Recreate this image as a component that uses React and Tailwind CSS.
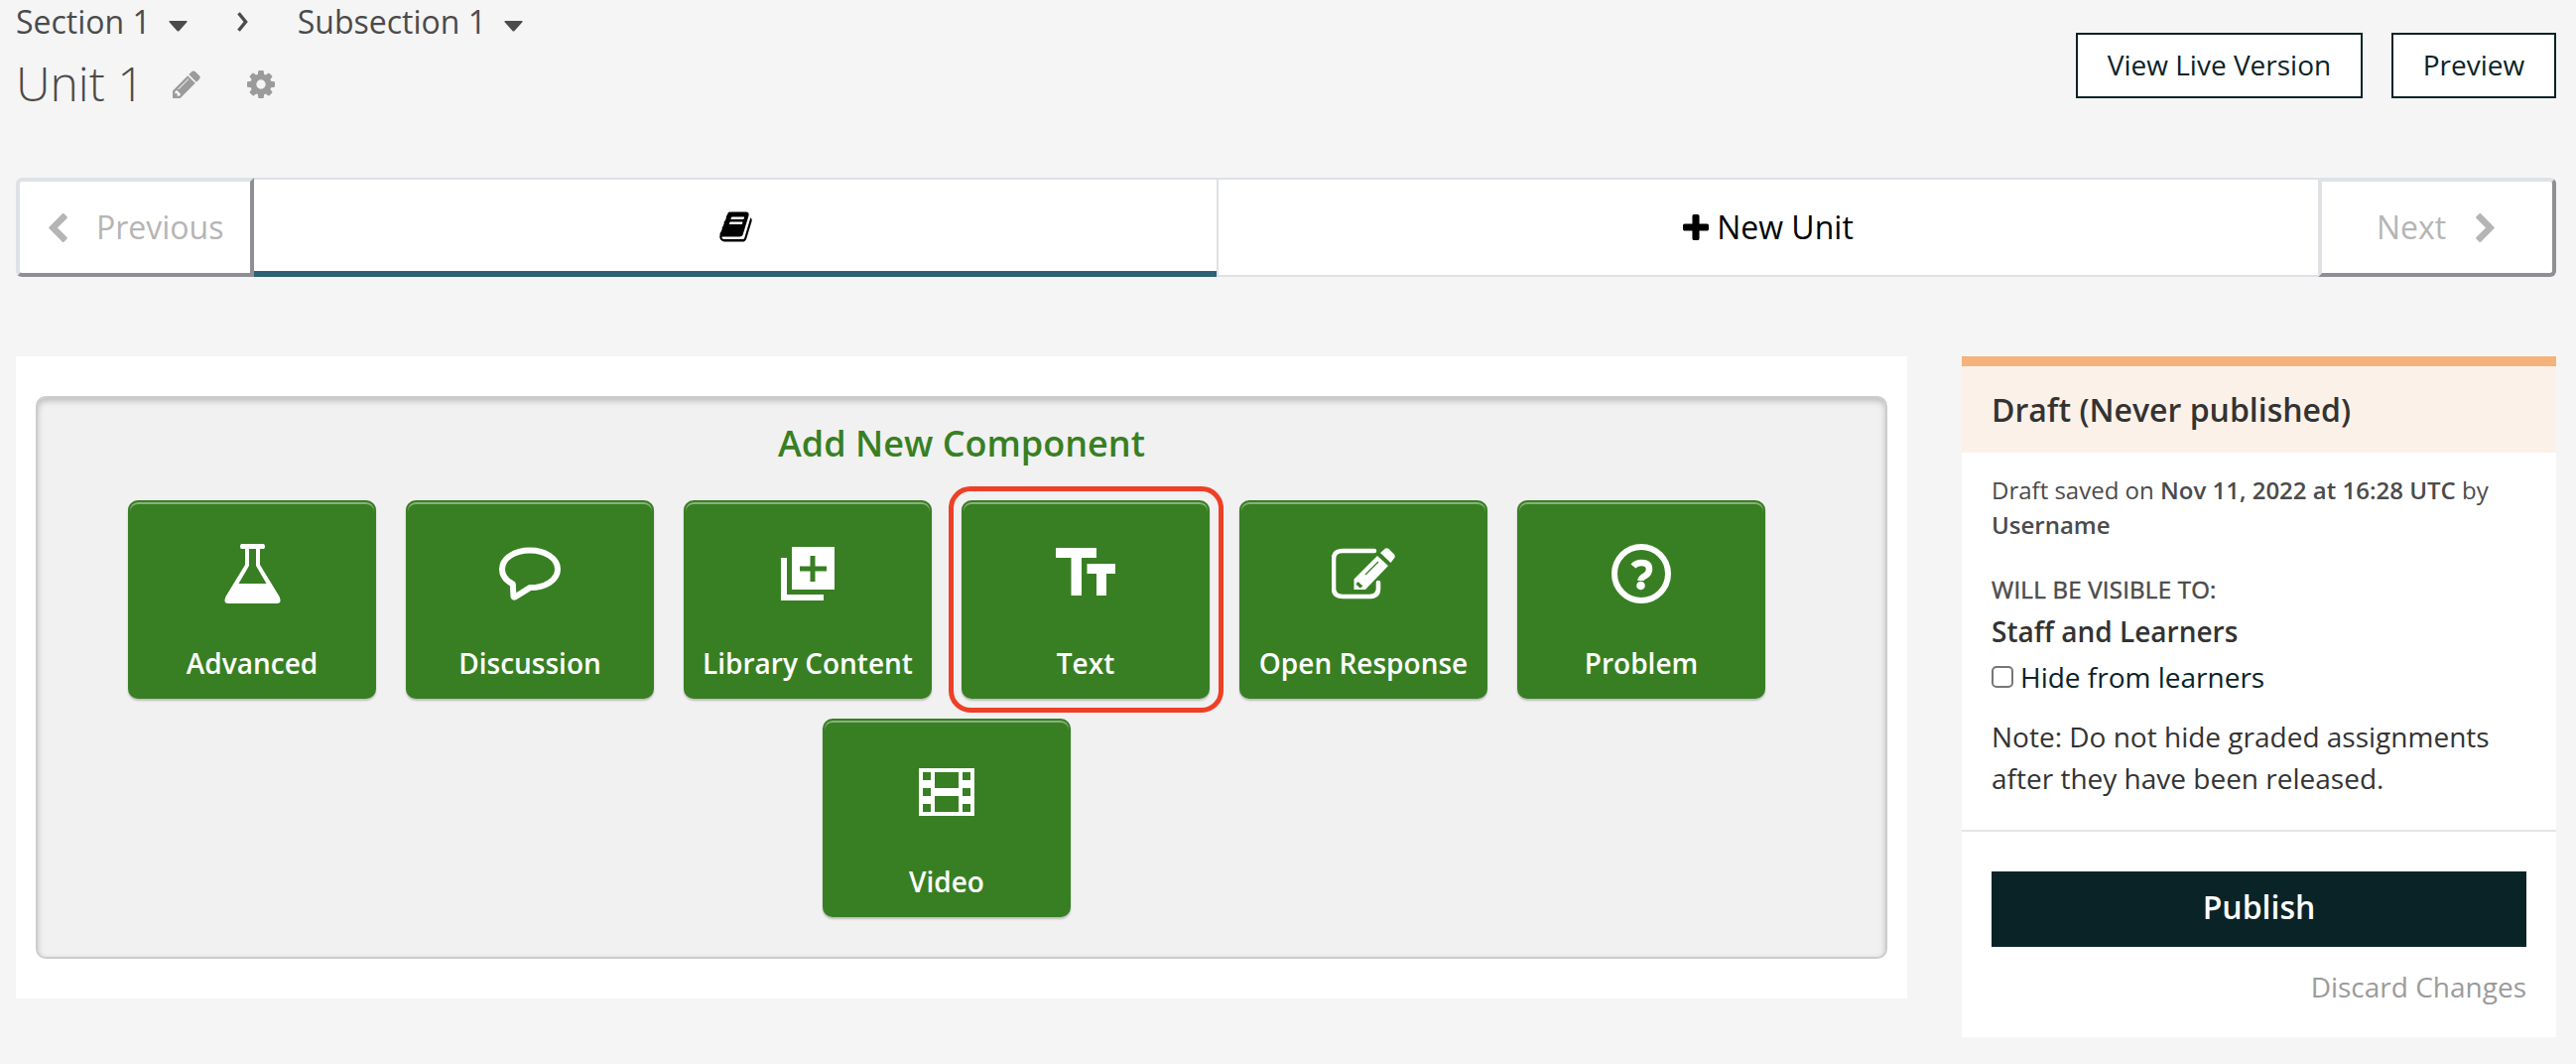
const BOOK = "M1703 478q40 57 18 129l-275 906q-19 64-76.5 107.5t-122.5 43.5h-923q-77 0-148.5-53.5t-99.5-131.5q-24-67-2-127 0-4 3-27t4-37q1-8-3-21.5t-3-19.5q2-11 8-21t16.5-23.5 16.5-23.5q23-38 45-91.5t30-91.5q3-10 .5-30t-.5-28q3-11 17-28t17-23q21-36 42-92t25-90q1-9-2.5-32t.5-28q4-13 22-30.5t22-22.5q19-26 42.5-84.5t27.5-96.5q1-8-3-25.5t-2-26.5q2-8 9-18t18-23 17-21q8-12 16.5-30.5t15-35 16-36 19.5-32 26.5-23.5 36-11.5 47.5 5.5l-1 3q38-9 51-9h761q74 0 114 56t18 130l-274 906q-36 119-71.5 153.5t-128.5 34.5h-869q-27 0-38 15-11 16-1 43 24 70 144 70h923q29 0 56-15.5t35-41.5l300-987q7-22 5-57 38 15 59 43zm-1064 2q-4 13 2 22.5t20 9.5h608q13 0 25.5-9.5t16.5-22.5l21-64q4-13-2-22.5t-20-9.5h-608q-13 0-25.5 9.5t-16.5 22.5zm-83 256q-4 13 2 22.5t20 9.5h608q13 0 25.5-9.5t16.5-22.5l21-64q4-13-2-22.5t-20-9.5h-608q-13 0-25.5 9.5t-16.5 22.5z";
const PENCIL = "M491 1536l91-91-235-235-91 91v107h128v128h107zm523-928q0-22-22-22-10 0-17 7l-542 542q-7 7-7 17 0 22 22 22 10 0 17-7l542-542q7-7 7-17zm-54-192l416 416-832 832h-416v-416zm683 96q0 53-37 90l-166 166-416-416 166-165q36-38 90-38 53 0 91 38l235 234q37 39 37 91z";
const COG = "M1152 896q0-106-75-181t-181-75-181 75-75 181 75 181 181 75 181-75 75-181zm512-109v222q0 12-8 23t-20 13l-185 28q-19 54-39 91 35 50 107 138 10 12 10 25t-9 23q-27 37-99 108t-94 71q-12 0-26-9l-138-108q-44 23-91 38-16 136-29 186-7 28-36 28h-222q-14 0-24.5-8.5t-11.5-21.5l-28-184q-49-16-90-37l-141 107q-10 9-25 9-14 0-25-11-126-114-165-168-7-10-7-23 0-12 8-23 15-21 51-66.5t54-70.5q-27-50-41-99l-183-27q-13-2-21-12.5t-8-23.5v-222q0-12 8-23t19-13l186-28q14-46 39-92-40-57-107-138-10-12-10-24 0-10 9-23 26-36 98.5-107.5t94.5-71.5q13 0 26 10l138 107q44-23 91-38 16-136 29-186 7-28 36-28h222q14 0 24.5 8.5t11.5 21.5l28 184q49 16 90 37l142-107q9-9 24-9 13 0 25 10 129 119 165 170 7 8 7 22 0 12-8 23-15 21-51 66.5t-54 70.5q26 50 41 98l183 28q13 2 21 12.5t8 23.5z";
const PLUS = "M1600 736v192q0 40-28 68t-68 28h-416v416q0 40-28 68t-68 28h-192q-40 0-68-28t-28-68v-416h-416q-40 0-68-28t-28-68v-192q0-40 28-68t68-28h416v-416q0-40 28-68t68-28h192q40 0 68 28t28 68v416h416q40 0 68 28t28 68z";
const CHEVRON_LEFT = "M1427 301l-531 531 531 531q19 19 19 45t-19 45l-166 166q-19 19-45 19t-45-19l-742-742q-19-19-19-45t19-45l742-742q19-19 45-19t45 19l166 166q19 19 19 45t-19 45z";

function Glyph({ d, className, viewBox = "0 0 1792 1792" }) {
  return (
    <svg viewBox={viewBox} fill="currentColor" className={className}>
      <path d={d} />
    </svg>
  );
}

function Caret({ className }) {
  return (
    <svg viewBox="0 0 19 11" fill="currentColor" className={className}>
      <path d="M1.500 0H17.500Q19.500 0 18.200 1.600L10.600 10Q9.500 11.200 8.400 10L.8 1.600Q-.5 0 1.500 0Z" />
    </svg>
  );
}

const icons = {
  Advanced: (
    <svg viewBox="0 0 57 60" className="h-[60px] w-[57px]" fill="#fff" fillRule="evenodd">
      <path d="M17.500 0H39.500Q41 0 41 2.500T39.500 5H36V21L55.500 53Q58.500 60 53 60H4Q-1.500 60 1.500 53L21 21V5H17.500Q16 5 16 2.500T17.500 0ZM25 5V22L14.500 40H42.500L32 22V5Z" />
    </svg>
  ),
  Discussion: (
    <svg viewBox="0 0 62 54" className="h-[54px] w-[62px]">
      <path d="M31 3.500c15.500 0 28 8 28 19s-12.500 18.600-28 18.600L16 50.500q-2 .6-1.600-2l-.6-11C7 34 3 29 3 22.500c0-11 12.500-19 28-19z" fill="none" stroke="#fff" strokeWidth="6" strokeLinejoin="round" />
    </svg>
  ),
  "Library Content": (
    <svg viewBox="0 0 54 54" className="size-[54px]" fill="#fff">
      <path d="M0 11h6v37h37v6H0z" />
      <path d="M11 0h43v43H11zM29.500 9v10.500H19v5h10.500V35h5V24.500H46v-5H34.500V9z" fillRule="evenodd" />
    </svg>
  ),
  Text: (
    <svg viewBox="0 0 60 52" className="h-[52px] w-[60px]" fill="#fff">
      <path d="M0 0h41v10H26v38H15.500V10H0zM31.500 16H60v10H51v22H41V26h-9.500z" />
    </svg>
  ),
  "Open Response": (
    <svg viewBox="0 0 64 52" className="h-[52px] w-[64px]">
      <path d="M43 3H11Q2 3 2 11v30q0 8 9 8h27q9 0 9-8v-6" fill="none" stroke="#fff" strokeWidth="4.600" strokeLinecap="round" />
      <path d="M46 8 57 18 34 42H22.500V31.500zM49 5l4.500-4q2-1.500 4 0L63 6.500q1.500 2 0 4L59.500 15z" fill="#fff" />
      <path d="M26.500 34l5 4.500-3 2-4-4z" fill="#387f23" />
      <path d="M34 27 47 14" stroke="#387f23" strokeWidth="1.300" />
    </svg>
  ),
  Problem: (
    <svg viewBox="0 0 60 60" className="size-[60px]">
      <circle cx="30" cy="30" r="27" fill="none" stroke="#fff" strokeWidth="6" />
      <path d="M22 22.500Q25 19 30 19q8 0 8 6.500 0 4-4 6.500-4.500 2.500-4.500 5" fill="none" stroke="#fff" strokeWidth="6.500" />
      <circle cx="29.500" cy="42" r="4.300" fill="#fff" />
    </svg>
  ),
  Video: (
    <svg viewBox="0 0 56 48" className="h-[48px] w-[56px]" fill="#fff" fillRule="evenodd">
      <path d="M0 0h56v48H0zM4 4v8h8V4zM4 20v8h8v-8zM4 36v8h8v-8zM16 4v16h24V4zM16 28v16h24V28zM44 4v8h8V4zM44 20v8h8v-8zM44 36v8h8v-8z" />
    </svg>
  ),
};

function ComponentButton({ name, highlighted }) {
  return (
    <button className="relative mr-[30px] mb-5 flex h-[200px] w-[250px] flex-col items-center rounded-[10px] border-2 border-[#387f23] bg-[#387f23] text-[28px] font-semibold text-white shadow-[inset_0_2px_0_rgba(255,255,255,0.4),0_2px_2px_rgba(0,0,0,0.22)]">
      <span className="mt-[42px] flex h-[60px] items-center">{icons[name]}</span>
      <span className="mt-[39px] leading-[42px] whitespace-nowrap">{name}</span>
      {highlighted && (
        <span className="absolute -top-4 -left-[15px] h-[228px] w-[277px] rounded-[22px] border-5 border-[#ee4027]" />
      )}
    </button>
  );
}

function Header() {
  return (
    <header className="flex h-[179px] justify-between">
      <div>
        <nav className="flex h-[52px] items-start pt-[2px] text-[32px] leading-[40px]">
          <span>Section 1</span>
          <Caret className="mt-[19px] ml-[18px] h-[11px] w-[19px]" />
          <svg viewBox="0 0 11 20" fill="none" stroke="currentColor" strokeWidth="3.400" className="mt-[10px] ml-[50px] h-5 w-[11px]">
            <path d="M1.500 1.200 8.600 10l-7.100 8.800" />
          </svg>
          <span className="ml-[50px]">Subsection 1</span>
          <Caret className="mt-[19px] ml-[18px] h-[11px] w-[19px]" />
        </nav>
        <div className="flex items-start text-[48px] leading-[64px] font-light">
          <h1>Unit 1</h1>
          <Glyph d={PENCIL} viewBox="128 128 1536 1536" className="mt-[19px] ml-[28px] size-[28px] text-[#9b9b9b]" />
          <Glyph d={COG} viewBox="128 128 1536 1536" className="mt-[19px] ml-[47px] size-[28px] text-[#9b9b9b]" />
        </div>
      </div>
      <div className="flex gap-[29px] pt-[33px] text-[28px] text-[#0a2327]">
        <button className="h-[66px] w-[289px] border-2 border-[#0a2327] bg-white pb-[2px]">View Live Version</button>
        <button className="h-[66px] w-[166px] border-2 border-[#0a2327] bg-white pb-[2px]">Preview</button>
      </div>
    </header>
  );
}

function UnitTabs() {
  return (
    <nav className="flex h-[100px] text-[32px]">
      <button className="flex w-[240px] items-center rounded-l-[6px] border-4 border-t-[#dee2e6] border-r-[#8f8e94] border-b-[#8f8e94] border-l-[#dee2e6] bg-white pl-[29px] text-[#b5b5b5]">
        <Glyph d={CHEVRON_LEFT} viewBox="400 26 1056 1612" className="h-[29px] w-[19px]" />
        <span className="ml-[29px]">Previous</span>
      </button>
      <button className="flex w-[970px] items-center justify-center border-t-2 border-b-6 border-t-[#dee2e6] border-b-[#2d6175] bg-white text-black">
        <Glyph d={BOOK} className="mt-[3px] size-[35px]" />
      </button>
      <button className="flex w-[1110px] items-center justify-center border-y-2 border-l-2 border-[#dee2e6] bg-white text-black">
        <Glyph d={PLUS} viewBox="192 128 1408 1408" className="mr-[8px] size-[26px]" />
        New Unit
      </button>
      <button className="flex w-[240px] items-center rounded-r-[6px] border-4 border-t-[#dee2e6] border-r-[#8f8e94] border-b-[#8f8e94] border-l-[#dee2e6] bg-white pl-[55px] text-[#b5b5b5]">
        <span>Next</span>
        <Glyph d={CHEVRON_LEFT} viewBox="400 26 1056 1612" className="ml-[30px] h-[29px] w-[19px] rotate-180" />
      </button>
    </nav>
  );
}

function Sidebar() {
  return (
    <aside className="h-[686px] w-[599px] bg-white">
      <h2 className="flex h-[97px] items-center border-t-10 border-[#f5b27b] bg-[#fcf1e8] px-[30px] text-[32px] font-semibold text-[#333]">
        Draft (Never published)
      </h2>
      <div className="h-[380px] px-[30px] pt-[20px] text-[28px] text-[#333]">
        <p className="text-2xl leading-[35px] text-[#4b4b4b]">
          Draft saved on <b className="font-semibold">Nov 11, 2022 at 16:28 UTC</b> by <b className="font-semibold">Username</b>
        </p>
        <h3 className="mt-[30px] text-2xl leading-[36px] tracking-[0.25px] text-[#4b4b4b] [-webkit-text-stroke:0.5px_#4b4b4b]">WILL BE VISIBLE TO:</h3>
        <p className="mt-[3px] leading-[42px] font-semibold">Staff and Learners</p>
        <label className="mt-[4px] flex items-center leading-[42px] text-[#0a2327]">
          <span className="mr-[7px] size-[22px] rounded-[5px] border-2 border-[#767676] bg-white" />
          Hide from learners
        </label>
        <p className="mt-[18px] leading-[42px]">Note: Do not hide graded assignments after they have been released.</p>
      </div>
      <div className="border-t-2 border-[#e5e5e5] px-[30px] pt-10 text-[28px]">
        <button className="block h-[76px] w-full bg-[#0a2327] pb-1 text-[32px] font-semibold text-white">Publish</button>
        <p className="mt-[19px] text-right leading-[42px] text-[#9b9b9b]">Discard Changes</p>
      </div>
    </aside>
  );
}

export default function App() {
  return (
    <div className="h-[1072px] w-[2596px] overflow-hidden bg-[#f5f5f5] px-4 font-['Open_Sans',sans-serif] text-[#4b4b4b]">
      <div className="w-[2560px]">
        <Header />
        <UnitTabs />
        <main className="mt-20 flex items-start justify-between">
          <section className="h-[647px] w-[1906px] bg-white px-5 pt-10">
            <div className="h-[567px] rounded-[10px] border-2 border-[#ccc] bg-[#f1f1f1] pt-[20px] shadow-[inset_0_3px_6px_rgba(0,0,0,0.22)]">
              <h2 className="text-center text-[36px] leading-[52px] font-semibold text-[#387f23]">Add New Component</h2>
              <div className="mt-[31px] flex flex-wrap justify-center px-[90px]">
                {Object.keys(icons).map((name) => (
                  <ComponentButton key={name} name={name} highlighted={name === "Text"} />
                ))}
              </div>
            </div>
          </section>
          <Sidebar />
        </main>
      </div>
    </div>
  );
}
